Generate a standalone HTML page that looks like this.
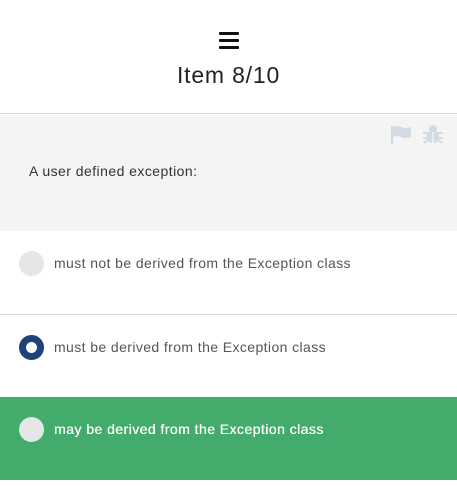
<!DOCTYPE html>
<html><head><style>
*{margin:0;padding:0;box-sizing:border-box}
body{width:457px;height:486px;background:#fff;font-family:"Liberation Sans",sans-serif;position:relative;overflow:hidden}
.hdr{position:absolute;top:0;left:0;width:457px;height:114px;border-bottom:1px solid #d6d6d6}
.ham{position:absolute;left:219px;top:32px;width:20px}
.ham div{height:3px;background:#111;margin-bottom:4px;border-radius:1px}
.title{position:absolute;top:62px;width:100%;text-align:center;font-size:23px;color:#222;letter-spacing:0.8px}
.q{position:absolute;top:115px;left:0;width:457px;height:116px;background:#f4f4f4}
.q p{position:absolute;left:29px;top:48px;font-size:14px;color:#333;letter-spacing:0.45px}
.opt{position:absolute;left:0;width:457px;height:83px}
.opt span{position:absolute;left:54px;top:24px;font-size:14px;color:#555;letter-spacing:0.4px}
.r{position:absolute;left:19px;top:20px;width:25px;height:25px;border-radius:50%;background:#e6e6e6}
</style></head><body>
<div class="hdr">
<div class="ham"><div></div><div></div><div></div></div>
<div class="title">Item 8/10</div>
</div>
<div class="q">
<svg style="position:absolute;left:390px;top:10px" width="22" height="20" viewBox="0 0 22 20"><rect x="1" y="1" width="2" height="18" fill="#d4dae4"/><path d="M3 2 Q8 0 11 2 Q15 4 21 2 L21 12 Q15 14 11 12 Q8 10 3 12Z" fill="#d4dae4"/></svg>
<svg style="position:absolute;left:422px;top:9px" width="22" height="21" viewBox="0 0 22 21"><circle cx="11" cy="5" r="4" fill="#d4dae4"/><rect x="5" y="7" width="12" height="12" rx="5" fill="#d4dae4"/><path d="M1 9h20M1 14h20M2 19l4-3M20 19l-4-3" stroke="#d4dae4" stroke-width="2"/><rect x="10.3" y="8" width="1.4" height="11" fill="#f4f4f4"/></svg>
<p>A user defined exception:</p>
</div>
<div class="opt" style="top:231px;border-bottom:1px solid #d6d6d6;height:84px"><div class="r"></div><span>must not be derived from the Exception class</span></div>
<div class="opt" style="top:315px"><div class="r" style="background:#fff;border:7px solid #1f4378"></div><span>must be derived from the Exception class</span></div>
<div class="opt" style="top:397px;background:#43ab6b"><div class="r"></div><span style="color:#fff;letter-spacing:0.45px;text-shadow:0.3px 0 0 #fff">may be derived from the Exception class</span></div>
</body></html>
